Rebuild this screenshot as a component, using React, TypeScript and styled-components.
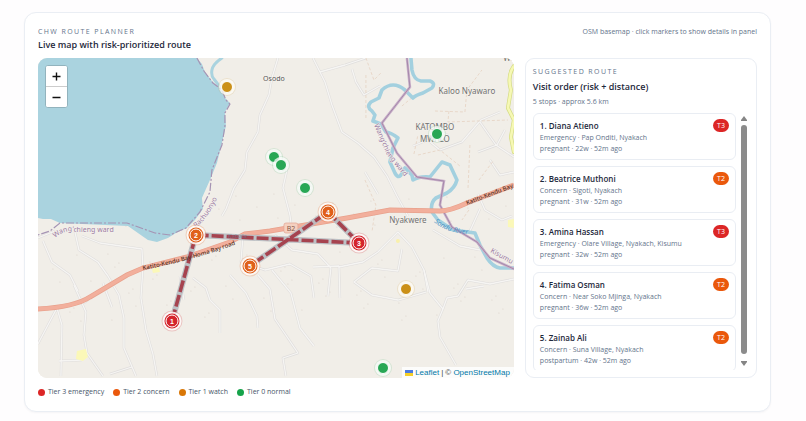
import React, { useState } from "react";
import styled, { createGlobalStyle } from "styled-components";

const GlobalStyle = createGlobalStyle`
  * { box-sizing: border-box; }
  body {
    margin: 0;
    background: #fefdfe;
    color: #1e293b;
    font-family: "Open Sans", "Noto Sans", sans-serif;
  }
  button { font-family: inherit; }
`;

type Tier = 0 | 1 | 2 | 3;

const tierColor: Record<Tier, string> = {
  3: "#dc2626",
  2: "#ea580c",
  1: "#d97706",
  0: "#16a34a",
};

const pinColor: Record<Tier, string> = {
  3: "#d4242c",
  2: "#e0601a",
  1: "#cb9018",
  0: "#28a755",
};

const Page = styled.main`
  padding: 12px 35px 10px 24px;
`;

const Planner = styled.section`
  display: flex;
  flex-direction: column;
  padding: 13px;
  border: 1px solid #eaeef4;
  border-radius: 12px;
  background: #fff;
  box-shadow: 0 1px 2px rgba(15, 23, 42, 0.04);
`;

const Header = styled.header`
  display: flex;
  justify-content: space-between;
  align-items: flex-start;
  margin-bottom: 7px;
`;

const Eyebrow = styled.p`
  margin: 0;
  font-size: 7px;
  line-height: 12px;
  letter-spacing: 1.4px;
  text-transform: uppercase;
  color: #64748b;
`;

const Title = styled.h2`
  margin: 0;
  font-size: 9px;
  line-height: 13px;
  font-weight: 600;
  color: #1e293b;
`;

const Note = styled.p`
  margin: 0;
  font-size: 7px;
  line-height: 12px;
  color: #64748b;
`;

const Columns = styled.div`
  display: grid;
  grid-template-columns: minmax(0, 2.05fr) minmax(0, 1fr);
  gap: 11px;
  height: 320px;
`;

const MapFrame = styled.div`
  position: relative;
  overflow: hidden;
  border-radius: 9px;
  background: #f2efe9;
`;

const MapArt = styled.svg`
  display: block;
  width: 100%;
  height: 100%;
  font-family: "Noto Sans", sans-serif;
`;

const ZoomControl = styled.div`
  position: absolute;
  top: 7px;
  left: 7px;
  display: flex;
  flex-direction: column;
  border: 1px solid #92b3bd;
  border-radius: 3px;
  overflow: hidden;
  background: #fff;
`;

const ZoomButton = styled.button`
  display: grid;
  place-items: center;
  width: 21px;
  height: 20px;
  padding: 0;
  border: 0;
  background: #fff;
  cursor: pointer;

  & + & {
    height: 21px;
    border-top: 1px solid #ccc;
  }
`;

const Pin = styled.button<{ $tier: Tier; $x: number; $y: number; $numbered: boolean }>`
  position: absolute;
  left: ${(p) => (p.$x / 476) * 100}%;
  top: ${(p) => (p.$y / 320) * 100}%;
  display: grid;
  place-items: center;
  width: ${(p) => (p.$numbered ? 13 : 12)}px;
  height: ${(p) => (p.$numbered ? 13 : 12)}px;
  padding: 0;
  transform: translate(-50%, -50%);
  border: 1px solid #fff;
  border-radius: 50%;
  background: ${(p) => pinColor[p.$tier]};
  box-shadow: ${(p) =>
    p.$numbered
      ? `0 0 0 1px ${pinColor[p.$tier]}, 0 0 0 3px rgba(255, 255, 255, 0.85), 0 0 0 4px ${pinColor[p.$tier]}33`
      : `0 0 0 2px rgba(255, 255, 255, 0.75), 0 0 0 3px ${pinColor[p.$tier]}22`};
  color: #fff;
  font-family: "Liberation Sans", sans-serif;
  font-size: 7px;
  line-height: 8px;
  font-weight: 700;
  cursor: pointer;
`;

const Attribution = styled.div`
  position: absolute;
  right: 0;
  bottom: 0;
  display: flex;
  align-items: center;
  gap: 2px;
  padding: 0 4px 0 3px;
  background: rgba(255, 255, 255, 0.8);
  color: #444;
  font-family: "Liberation Sans", sans-serif;
  font-size: 8px;
  line-height: 11px;
  white-space: nowrap;

  a {
    color: #0078a8;
    text-decoration: none;
  }
`;

const RoutePanel = styled.aside`
  display: flex;
  flex-direction: column;
  min-height: 0;
  padding: 7px;
  border: 1px solid #eaeef4;
  border-radius: 9px;
`;

const PanelTitle = styled.h3`
  margin: 2px 0 0;
  font-size: 9px;
  line-height: 14px;
  font-weight: 600;
  color: #1e293b;
`;

const PanelMeta = styled.p`
  margin: 2px 0 5px;
  font-size: 7px;
  line-height: 12px;
  color: #64748b;
`;

const ScrollArea = styled.div`
  display: flex;
  flex: 1;
  min-height: 0;
  gap: 5px;
`;

const StopList = styled.ol`
  flex: 1;
  display: flex;
  flex-direction: column;
  gap: 6px;
  margin: 0;
  padding: 0;
  overflow: hidden;
  list-style: none;
`;

const Stop = styled.li`
  flex: none;
  display: flex;
  justify-content: space-between;
  align-items: flex-start;
  padding: 5px 6px 5px;
  border: 1px solid #e9edf3;
  border-radius: 6px;
`;

const StopName = styled.h4`
  margin: 0;
  font-size: 8px;
  line-height: 13px;
  font-weight: 600;
  color: #1e293b;
`;

const StopLine = styled.p`
  margin: 0;
  font-size: 7px;
  line-height: 11px;
  color: #64748b;
  white-space: nowrap;
`;

const TierBadge = styled.span<{ $tier: Tier }>`
  padding: 0 4px;
  border-radius: 7px;
  background: ${(p) => tierColor[p.$tier]};
  color: #fff;
  font-size: 7px;
  line-height: 13px;
`;

const Rail = styled.div`
  display: flex;
  flex-direction: column;
  align-items: center;
  gap: 4px;
  width: 6px;
  margin: 3px 2px 4px 0;
`;

const RailThumb = styled.div`
  flex: 1;
  width: 6px;
  margin-bottom: 3px;
  border-radius: 3px;
  background: #8b8b8b;
`;

const Legend = styled.ul`
  display: flex;
  flex-wrap: wrap;
  gap: 9px;
  margin: 8px 0 0;
  padding: 0;
  list-style: none;
  font-size: 7px;
  line-height: 12px;
  color: #475569;
`;

const LegendItem = styled.li`
  display: flex;
  align-items: center;
  gap: 3px;
`;

const Dot = styled.span<{ $tier: Tier }>`
  width: 7px;
  height: 7px;
  border-radius: 50%;
  background: ${(p) => tierColor[p.$tier]};
`;

const stops: { name: string; status: string; detail: string; tier: Tier }[] = [
  { name: "Diana Atieno", status: "Emergency · Pap Onditi, Nyakach", detail: "pregnant · 22w · 52m ago", tier: 3 },
  { name: "Beatrice Muthoni", status: "Concern · Sigoti, Nyakach", detail: "pregnant · 31w · 52m ago", tier: 2 },
  { name: "Amina Hassan", status: "Emergency · Olare Village, Nyakach, Kisumu", detail: "pregnant · 32w · 52m ago", tier: 3 },
  { name: "Fatima Osman", status: "Concern · Near Soko Mjinga, Nyakach", detail: "pregnant · 36w · 52m ago", tier: 2 },
  { name: "Zainab Ali", status: "Concern · Suna Village, Nyakach", detail: "postpartum · 42w · 52m ago", tier: 2 },
];

const pins: { x: number; y: number; tier: Tier; order?: number }[] = [
  { x: 189, y: 29, tier: 1 },
  { x: 368, y: 231, tier: 1 },
  { x: 236, y: 99, tier: 0 },
  { x: 243, y: 107, tier: 0 },
  { x: 267, y: 130, tier: 0 },
  { x: 399, y: 76, tier: 0 },
  { x: 345, y: 310, tier: 0 },
  { x: 134, y: 263, tier: 3, order: 1 },
  { x: 158, y: 177, tier: 2, order: 2 },
  { x: 321, y: 185, tier: 3, order: 3 },
  { x: 290, y: 154, tier: 2, order: 4 },
  { x: 212, y: 208, tier: 2, order: 5 },
];

const legend: { tier: Tier; label: string }[] = [
  { tier: 3, label: "Tier 3 emergency" },
  { tier: 2, label: "Tier 2 concern" },
  { tier: 1, label: "Tier 1 watch" },
  { tier: 0, label: "Tier 0 normal" },
];

const lanes = [
  "M278 58 272 78 269 95 260 115 258 132 247 152 245 170 234 188 226 209 222 216",
  "M313 58 325 82 332 105 342 132 358 143 374 157 387 176 397 196 408 216",
  "M320 72 345 65 366 58 M352 69 356 82 364 95 380 86",
  "M38 238 55 231 M43 241 52 262 70 275 78 291",
  "M75 232 79 250 98 262 108 276 119 295 124 318 124 348 136 376",
  "M82 236 100 243 142 249 143 268 141 298 146 330 153 354 157 376",
  "M38 344 48 325 57 308 62 325 61 376 M59 361 82 360",
  "M74 285 86 312 84 335 87 353 103 376 M110 374 132 367",
  "M103 283 112 307 M84 303 98 291",
  "M193 278 206 288 210 300 220 310 220 333",
  "M180 276 184 300 M230 275 246 293 257 316 258 328",
  "M258 275 270 289 275 319 298 353 283 358 286 376",
  "M272 270 291 293 300 328 314 346",
  "M243 237 241 262 265 270 290 264 311 276 314 298",
  "M275 235 292 250 318 254 331 268 328 296",
  "M287 170 283 188 290 215 292 231",
  "M313 267 339 266 340 298 M339 267 363 262 378 252 398 232 412 247 424 270 428 292",
  "M354 282 372 268 398 271 402 249 M354 282 372 295 398 300 426 292",
  "M424 270 430 293 443 309 438 321 440 337 456 365",
  "M443 309 447 298 458 296 468 280 490 284 514 279",
  "M365 172 378 194 M413 146 428 140 440 150 462 142 481 120 500 112",
  "M421 123 448 135 M480 122 496 145 514 157",
  "M490 160 500 175 514 172 M478 152 497 145 505 130",
  "M478 194 485 210 502 220 512 216 M480 209 470 231",
  "M433 230 460 246 480 250 M466 289 484 286",
];

const paths = [
  "M366 75 366 120",
  "M366 58 374 80 382 72",
  "M435 111 465 112 467 90 482 70",
  "M449 111 448 122 508 120",
  "M414 154 418 135 M418 155 440 150 460 166",
  "M470 145 468 190 M469 210 462 220",
  "M365 180 376 205 372 232",
  "M479 180 494 160 M402 106 414 96",
];

const coast =
  "M38 58H197L202 64 205 72 212 81 218 87 223 91 225 98 230 103 225 112 226 126 222 143 217 163 210 180 202 198 203 209 195 220 187 228 176 233 168 238 157 242 148 240 138 233 128 226 60 223 51 219 43 219 38 218Z";

const river =
  "M411 58 412 70Q414 80 421 81L430 81Q436 83 432 88L423 93Q416 95 413 98L405 90Q393 80 382 90L379 98 371 102Q366 107 372 111L375 115 373 121 381 124 386 132Q392 133 398 138L393 148 390 162 395 173Q399 180 402 173L405 168 412 175 413 180Q420 176 430 177L442 162 450 165 457 180Q455 188 447 193L436 198Q430 203 432 212L438 220 453 230 475 233 480 245 487 258Q493 267 500 268L514 268";

const boundary =
  "M407 58 410 87 382 123 397 153 417 177 444 181 440 205 452 227 477 242 490 258 514 269";

const highway =
  "M38 309Q75 307 90 297L127 275 143 268 187 257 230 242 245 234 270 231 347 218 390 210 440 211Q450 211 467 203L514 185";

const route = "M172 321 196 235 359 243 328 212 250 266";

function Basemap() {
  return (
    <MapArt viewBox="38 58 476 320" preserveAspectRatio="xMidYMid slice" role="img" aria-label="Map of Nyakach">
      <defs>
        <path id="west-ward" d="M55 238Q65 229 76 232L118 232" />
        <path id="rachuonyo" d="M196 228Q211 215 220 192" />
        <path id="road-west" d="M143 270Q205 258 246 240" />
        <path id="road-east" d="M467 205 520 185" />
        <path id="east-ward" d="M374 125 387 155 412 186" />
        <path id="river-name" d="M434 222Q450 236 482 234" />
        <path id="kisumu-name" d="M490 252 520 269" />
      </defs>
      <rect x="38" y="58" width="476" height="320" fill="#f1eee8" />
      <g fill="#d9d3ca">
        {Array.from({ length: 110 }, (_, i) => (
          <circle
            key={i}
            cx={50 + ((i * 83) % 460)}
            cy={i % 3 ? 252 + ((i * 37) % 70) : 70 + ((i * 53) % 160)}
            r="0.6"
          />
        ))}
      </g>
      <g fill="none" strokeLinejoin="round">
        {lanes.map((d) => (
          <path key={d} d={d} stroke="#dfdddc" strokeWidth="2.4" />
        ))}
        {lanes.map((d) => (
          <path key={d} d={d} stroke="#f6f5f3" strokeWidth="1.3" />
        ))}
        {paths.map((d) => (
          <path key={d} d={d} stroke="#e6d2c2" strokeWidth="0.8" strokeDasharray="3 2" />
        ))}
      </g>
      <path d={coast} fill="#aad3df" />
      <g fill="none" strokeLinejoin="round" strokeLinecap="round">
        <path d="M222 58Q213 64 212 70T214 79L220 87 218 94" stroke="#aad3df" strokeWidth="3" />
        <path d={river} stroke="#a3d0df" strokeWidth="3.6" />
        <path d="M514 66Q507 76 511 90L508 108 514 120 511 137 514 152" stroke="#d5dc84" strokeWidth="4" />
        <path d="M514 66Q507 76 511 90L508 108 514 120 511 137 514 152" stroke="#f6f8b4" strokeWidth="2.6" />
      </g>
      <g fill="none" stroke="#a594b4" strokeWidth="1.2" strokeDasharray="8 2 2 2">
        <path d="M197 58 204 71 213 83 222 90 226 100 230 104 225 113 225 126 222 145 212 170 210 192 200 212 186 228 170 235 155 233 127 223 60 223 50 231 38 235" />
      </g>
      <path d={boundary} fill="none" stroke="#c9b1c9" strokeWidth="2.6" />
      <path d={boundary} fill="none" stroke="#a588ab" strokeWidth="1" />
      <path d={highway} fill="none" stroke="#e8a18c" strokeWidth="5" />
      <path d={highway} fill="none" stroke="#f2af9c" strokeWidth="3.6" />
      <path d="M77 351 86 349 88 357 83 361 76 359Z M152 269 159 267 160 272 153 273Z M508 220 514 219 514 228 508 227Z" fill="#fbf8b8" />
      <circle cx="398" cy="241" r="2" fill="#f9f0ab" />
      <rect x="284" y="223" width="14" height="10" rx="2" fill="#f4d0c0" stroke="#e3a490" strokeWidth="0.7" />
      <g fill="none">
        <path d={route} stroke="#b7bbc1" strokeWidth="6" strokeLinejoin="round" opacity="0.9" />
        <path d={route} stroke="#a6434f" strokeWidth="3.6" strokeDasharray="12 3" />
      </g>
      <g stroke="#f5f2ed" strokeWidth="1" paintOrder="stroke" strokeLinejoin="round">
        <g fill="#707070" textAnchor="middle">
          <text x="274" y="81" fontSize="7" fill="#555">Osodo</text>
          <text x="467" y="94" fontSize="8">Kaloo Nyawaro</text>
          <text x="435" y="130" fontSize="8">KATOMBO</text>
          <text x="435" y="142" fontSize="8">MWALO</text>
          <text x="408" y="223" fontSize="8">Nyakwere</text>
          <text x="508" y="61" fontSize="8">W.</text>
          <text x="291" y="231" fontSize="7" fill="#865848" stroke="none">B2</text>
        </g>
        <g fill="#9b7ba3" fontSize="7">
          <text><textPath href="#west-ward">Wang'chieng ward</textPath></text>
          <text><textPath href="#rachuonyo">Rachuonyo</textPath></text>
          <text><textPath href="#east-ward">Wang'chieng ward</textPath></text>
          <text><textPath href="#kisumu-name">Kisumu</textPath></text>
        </g>
        <text fill="#4f94c6" stroke="none" fontSize="7" fontStyle="italic"><textPath href="#river-name">Sondu River</textPath></text>
      </g>
      <g fill="#54301f" fontSize="6" fontWeight="500">
        <text><textPath href="#road-west">Katito-Kendu Bay-Homa Bay road</textPath></text>
        <text><textPath href="#road-east">Katito-Kendu Bay</textPath></text>
      </g>
      <text x="228" y="238" fill="#647d96" fontSize="6" opacity="0.6">Kabala</text>
    </MapArt>
  );
}

function RailArrow({ down = false }: { down?: boolean }) {
  return (
    <svg width="6" height="5" viewBox="0 0 6 5" aria-hidden="true">
      <path d={down ? "M0 0H6V1L3 5 0 1Z" : "M0 5H6V4L3 0 0 4Z"} fill="#858585" />
    </svg>
  );
}

export default function App() {
  const [, setSelected] = useState<number | null>(null);

  return (
    <>
      <GlobalStyle />
      <Page>
        <Planner>
          <Header>
            <div>
              <Eyebrow>CHW route planner</Eyebrow>
              <Title>Live map with risk-prioritized route</Title>
            </div>
            <Note>OSM basemap · click markers to show details in panel</Note>
          </Header>
          <Columns>
            <MapFrame>
              <Basemap />
              {pins.map((pin, i) => (
                <Pin
                  key={i}
                  type="button"
                  aria-label={pin.order ? `Stop ${pin.order}` : `Tier ${pin.tier} patient`}
                  $x={pin.x}
                  $y={pin.y}
                  $tier={pin.tier}
                  $numbered={pin.order !== undefined}
                  onClick={() => setSelected(i)}
                >
                  {pin.order}
                </Pin>
              ))}
              <ZoomControl>
                <ZoomButton type="button" aria-label="Zoom in">
                  <svg width="9" height="9" viewBox="0 0 9 9"><path d="M4.5 0.5V8.5M0.5 4.5H8.5" stroke="#111" strokeWidth="1.4" /></svg>
                </ZoomButton>
                <ZoomButton type="button" aria-label="Zoom out">
                  <svg width="9" height="9" viewBox="0 0 9 9"><path d="M0.5 4.5H8.5" stroke="#111" strokeWidth="1.3" /></svg>
                </ZoomButton>
              </ZoomControl>
              <Attribution>
                <svg width="8" height="6" viewBox="0 0 8 6" aria-hidden="true">
                  <path d="M0 0H8V3H0Z" fill="#4c7be1" />
                  <path d="M0 3H8V6H0Z" fill="#f5cf28" />
                </svg>
                <a href="#leaflet">Leaflet</a>
                <span>|</span>
                <span>© <a href="#openstreetmap">OpenStreetMap</a></span>
              </Attribution>
            </MapFrame>
            <RoutePanel>
              <Eyebrow>Suggested route</Eyebrow>
              <PanelTitle>Visit order (risk + distance)</PanelTitle>
              <PanelMeta>5 stops · approx 5.6 km</PanelMeta>
              <ScrollArea>
                <StopList>
                  {stops.map((stop, i) => (
                    <Stop key={stop.name}>
                      <div>
                        <StopName>{i + 1}. {stop.name}</StopName>
                        <StopLine>{stop.status}</StopLine>
                        <StopLine>{stop.detail}</StopLine>
                      </div>
                      <TierBadge $tier={stop.tier}>T{stop.tier}</TierBadge>
                    </Stop>
                  ))}
                </StopList>
                <Rail aria-hidden="true">
                  <RailArrow />
                  <RailThumb />
                  <RailArrow down />
                </Rail>
              </ScrollArea>
            </RoutePanel>
          </Columns>
          <Legend>
            {legend.map((item) => (
              <LegendItem key={item.tier}>
                <Dot $tier={item.tier} />
                {item.label}
              </LegendItem>
            ))}
          </Legend>
        </Planner>
      </Page>
    </>
  );
}
